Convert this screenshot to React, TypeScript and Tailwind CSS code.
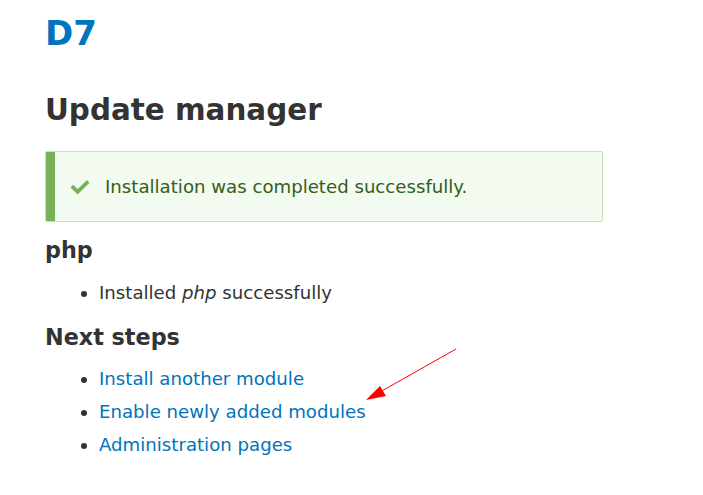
import React from "react"

const nextSteps = [
  "Install another module",
  "Enable newly added modules",
  "Administration pages",
]

function CheckIcon() {
  return (
    <svg width="20" height="20" viewBox="0 0 16 16" className="shrink-0">
      <path
        fill="#73b355"
        d="M6.464 13.676c-.194.194-.513.194-.707 0l-4.96-4.955c-.194-.193-.194-.513 0-.707l1.405-1.407c.194-.195.512-.195.707 0l2.849 2.848c.194.193.513.193.707 0l6.629-6.626c.195-.194.514-.194.707 0l1.404 1.404c.193.194.193.513 0 .707l-8.741 8.736z"
      />
    </svg>
  )
}

export default function App() {
  return (
    <div className="relative w-[703px] h-[495px] bg-white overflow-hidden font-['DejaVu_Sans',sans-serif] text-[#333]">
      <div className="flex flex-col items-start pl-[45px] pt-[13px]">
        <a href="#" className="text-[34px] leading-[40px] font-bold text-[#0074bd]">D7</a>
        <h1 className="mt-[39px] text-[29.4px] leading-[36px] font-bold">Update manager</h1>

        <div className="mt-[23px] flex h-[71px] w-[558px] overflow-hidden rounded-[2px] border border-[#c9e1bd] bg-[#f3faef]">
          <div className="w-[10px] -my-px -ml-px bg-[#77b259]" />
          <div className="flex items-center gap-[15px] pl-[15px]">
            <CheckIcon />
            <span className="text-[18.15px] text-[#325e1c]">Installation was completed successfully.</span>
          </div>
        </div>

        <h2 className="mt-[14px] text-[22.3px] leading-[28px] font-bold">php</h2>
        <ul className="mt-[12px] list-disc pl-[54px]">
          <li className="text-[18.15px] leading-[33px]">
            Installed <em>php</em> successfully
          </li>
        </ul>

        <h2 className="mt-[14px] text-[22.3px] leading-[28px] font-bold">Next steps</h2>
        <ul className="mt-[11px] list-disc pl-[54px]">
          {nextSteps.map(step => (
            <li key={step} className="text-[18.15px] leading-[33px]">
              <a href="#" className="text-[#0074bd]">{step}</a>
            </li>
          ))}
        </ul>
      </div>

      <svg className="absolute left-0 top-0 pointer-events-none" width="703" height="495">
        <line x1="456" y1="349" x2="380" y2="392" stroke="#ff0000" strokeWidth="1" />
        <polygon points="366,400 380,386 386,396" fill="#ff0000" />
      </svg>
    </div>
  )
}
